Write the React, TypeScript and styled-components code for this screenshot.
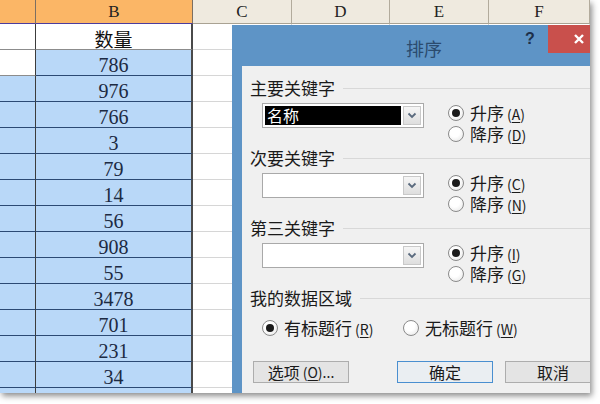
import React from "react";
import styled, { createGlobalStyle } from "styled-components";

const GlobalStyle = createGlobalStyle`
  *, *::before, *::after { box-sizing: border-box; }
  html, body { margin: 0; padding: 0; background: #fff; }
  body { width: 600px; height: 404px; overflow: hidden; }
`;

const Frame = styled.div`
  position: relative;
  width: 590px;
  height: 393px;
  overflow: hidden;
  background: #fff;
  box-shadow: 2px 3px 6px rgba(0, 0, 0, 0.45);
`;

const Sheet = styled.div`
  display: grid;
  grid-template-columns: 36px 157px 99px 98px 99px 1fr;
  grid-template-rows: 24px;
  grid-auto-rows: 26px;
  font-family: "Liberation Serif", serif;
`;

const HeadCell = styled.div<{ $active?: boolean }>`
  display: flex;
  align-items: center;
  justify-content: center;
  font-size: 17px;
  color: #222;
  background: ${(p) => (p.$active ? "#fbb666" : "#efeadf")};
  border-right: 1px solid ${(p) => (p.$active ? "#7c6f62" : "#b2ab9c")};
  border-bottom: 1px solid ${(p) => (p.$active ? "#4b3c9e" : "#a9a293")};
`;

const Cell = styled.div<{ $sel?: boolean; $col: number }>`
  display: flex;
  align-items: center;
  justify-content: center;
  padding-top: 4px;
  font-size: 20px;
  line-height: 20px;
  color: #1c2a42;
  background: ${(p) => (p.$sel ? "#b9d8f8" : "#fff")};
  border-bottom: 1px solid
    ${(p) => (p.$sel ? "#2c4a74" : p.$col < 2 ? "#8c8c8c" : "#d6d6d6")};
  border-right: ${(p) =>
    p.$col === 1
      ? "2px solid #4a4a4a"
      : p.$col === 0
      ? "1px solid #3c3c3c"
      : "1px solid #d6d6d6"};
`;

const CjkCell = styled(Cell)`
  font-family: "Noto Sans CJK SC", sans-serif;
  font-size: 19px;
  color: #111;
`;

/* dialog window lying over the sheet */
const Dialog = styled.div`
  position: absolute;
  left: 232px;
  top: 25px;
  width: 384px;
  bottom: 0;
  display: flex;
  flex-direction: column;
  background: #5e94c6;
  font-family: "Noto Sans CJK SC", sans-serif;
  color: #1a1a1a;
`;

const TitleBar = styled.div`
  height: 41px;
  display: grid;
  grid-template-columns: 1fr auto 1fr;
  align-items: start;
`;

const Title = styled.div`
  grid-column: 2;
  padding-top: 10px;
  font-size: 18px;
  color: #2b4b6e;
`;

const Controls = styled.div`
  grid-column: 3;
  justify-self: end;
  display: flex;
  align-items: flex-start;
  margin-right: 6px;
`;

const Help = styled.div`
  width: 36px;
  height: 28px;
  display: flex;
  align-items: center;
  justify-content: center;
  font-family: "Liberation Sans", sans-serif;
  font-weight: 700;
  font-size: 16px;
  color: #1d2f4a;
`;

const Close = styled.div`
  width: 62px;
  height: 28px;
  display: flex;
  align-items: center;
  justify-content: center;
  background: #c9504c;
`;

const Body = styled.div`
  flex: 1;
  margin-left: 10px;
  background: #f0f0f0;
  padding: 12px 0 0 8px;
`;

const Section = styled.div`
  height: 70px;
`;

const GroupTitle = styled.div`
  display: flex;
  align-items: center;
  gap: 8px;
  height: 20px;
  font-size: 17px;
  line-height: 20px;
  &::after {
    content: "";
    flex: 1;
    height: 1px;
    background: #d8d8d8;
  }
`;

const KeyRow = styled.div`
  display: flex;
  align-items: flex-start;
  margin-top: 5px;
  padding-left: 12px;
`;

const Combo = styled.div`
  width: 162px;
  height: 25px;
  display: flex;
  padding: 2px;
  gap: 2px;
  background: #fff;
  border: 1px solid #a9a9a9;
`;

const ComboText = styled.div<{ $selected?: boolean }>`
  flex: 1;
  padding-left: 2px;
  font-size: 16px;
  line-height: 19px;
  color: #fff;
  background: ${(p) => (p.$selected ? "#000" : "transparent")};
`;

const DropButton = styled.div`
  width: 18px;
  display: flex;
  align-items: center;
  justify-content: center;
  border: 1px solid #c9c9c9;
  background: linear-gradient(#f6f6f6, #dedede);
`;

const RadioCol = styled.div`
  display: flex;
  flex-direction: column;
  margin-left: 24px;
`;

const RadioItem = styled.div<{ $w?: number }>`
  display: flex;
  align-items: center;
  gap: 6px;
  height: 20.5px;
  font-size: 17px;
  line-height: 20px;
  width: ${(p) => (p.$w ? `${p.$w}px` : "auto")};
`;

const Circle = styled.span<{ $on?: boolean }>`
  width: 16px;
  height: 16px;
  flex: none;
  border-radius: 50%;
  border: 1px solid #8a8a8a;
  background: radial-gradient(circle at 40% 35%, #fff 40%, #e2e2e2);
  display: flex;
  align-items: center;
  justify-content: center;
  &::after {
    content: "";
    width: 8px;
    height: 8px;
    border-radius: 50%;
    background: ${(p) => (p.$on ? "#1b1b1b" : "transparent")};
  }
`;

const Key = styled.span`
  font-size: 14px;
  line-height: 16px;
  margin-left: 3px;
  & u {
    text-underline-offset: 2px;
  }
`;

const DataRow = styled.div`
  display: flex;
  margin-top: 10px;
  padding-left: 12px;
`;

const ButtonRow = styled.div`
  display: flex;
  margin-top: 22px;
  padding-left: 3px;
`;

const Button = styled.div<{ $primary?: boolean; $gap?: number }>`
  width: 96px;
  height: 22px;
  flex: none;
  margin-left: ${(p) => p.$gap ?? 0}px;
  display: flex;
  align-items: center;
  justify-content: center;
  font-size: 16px;
  line-height: 20px;
  background: ${(p) => (p.$primary ? "#eaeef2" : "#e4e4e4")};
  border: 1px solid ${(p) => (p.$primary ? "#4a8fd0" : "#adadad")};
`;

const Chevron = () => (
  <svg width="10" height="7" viewBox="0 0 10 7">
    <path d="M1.5 1.5 L5 5 L8.5 1.5" fill="none" stroke="#5a6a7e" strokeWidth="1.8" />
  </svg>
);

const CloseIcon = () => (
  <svg width="12" height="12" viewBox="0 0 12 12">
    <path d="M2 2 L10 10 M10 2 L2 10" stroke="#fff" strokeWidth="2.4" />
  </svg>
);

const values = ["786", "976", "766", "3", "79", "14", "56", "908", "55", "3478", "701", "231", "34", ""];
const heads = ["", "B", "C", "D", "E", "F"];

const Radio: React.FC<{ on?: boolean; label: string; k: string; w?: number }> = ({ on, label, k, w }) => (
  <RadioItem $w={w}>
    <Circle $on={on} />
    <span>
      {label}
      <Key>
        (<u>{k}</u>)
      </Key>
    </span>
  </RadioItem>
);

const keys = [
  { title: "主要关键字", value: "名称", a: "A", d: "D" },
  { title: "次要关键字", value: "", a: "C", d: "N" },
  { title: "第三关键字", value: "", a: "I", d: "G" },
];

export default function App() {
  return (
    <>
      <GlobalStyle />
      <Frame>
        <Sheet>
          {heads.map((h, i) => (
            <HeadCell key={"h" + i} $active={i < 2}>
              {h}
            </HeadCell>
          ))}
          {heads.map((_, c) =>
            c === 1 ? (
              <CjkCell key={"t" + c} $col={c}>
                数量
              </CjkCell>
            ) : (
              <Cell key={"t" + c} $col={c} />
            )
          )}
          {values.map((v, r) =>
            heads.map((_, c) => (
              <Cell key={r + "-" + c} $col={c} $sel={c === 1 || (c === 0 && r > 0)}>
                {c === 1 ? v : ""}
              </Cell>
            ))
          )}
        </Sheet>

        <Dialog>
          <TitleBar>
            <Title>排序</Title>
            <Controls>
              <Help>?</Help>
              <Close>
                <CloseIcon />
              </Close>
            </Controls>
          </TitleBar>
          <Body>
            {keys.map((s) => (
              <Section key={s.title}>
                <GroupTitle>{s.title}</GroupTitle>
                <KeyRow>
                  <Combo>
                    <ComboText $selected={!!s.value}>{s.value}</ComboText>
                    <DropButton>
                      <Chevron />
                    </DropButton>
                  </Combo>
                  <RadioCol>
                    <Radio on label="升序" k={s.a} />
                    <Radio label="降序" k={s.d} />
                  </RadioCol>
                </KeyRow>
              </Section>
            ))}
            <GroupTitle>我的数据区域</GroupTitle>
            <DataRow>
              <Radio on label="有标题行" k="R" w={141} />
              <Radio label="无标题行" k="W" />
            </DataRow>
            <ButtonRow>
              <Button>
                选项<Key>(<u>O</u>)...</Key>
              </Button>
              <Button $primary $gap={48}>
                确定
              </Button>
              <Button $gap={12}>取消</Button>
            </ButtonRow>
          </Body>
        </Dialog>
      </Frame>
    </>
  );
}
